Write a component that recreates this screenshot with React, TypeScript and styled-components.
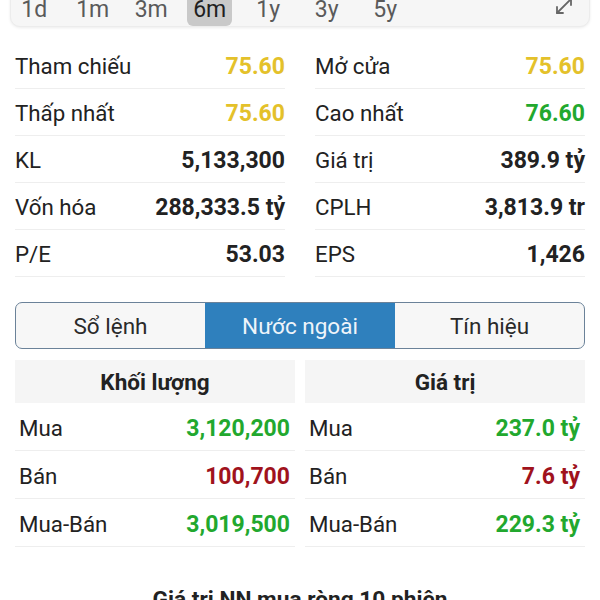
import React from "react";
import styled, { createGlobalStyle } from "styled-components";
import { MoveDiagonal } from "lucide-react";

const Global = createGlobalStyle`
  html, body { margin: 0; padding: 0; background: #ffffff; }
  body { font-family: Roboto, "Noto Sans", "Liberation Sans", sans-serif; color: #222; overflow: hidden; }
`;

const Page = styled.div`
  width: 600px;
  display: flex;
  flex-direction: column;
`;

const RangeBar = styled.div`
  margin: -17px 10px 0 10px;
  height: 44px;
  box-sizing: border-box;
  background: #f6f6f6;
  border: 1px solid #ececec;
  border-radius: 0 0 10px 10px;
  box-shadow: 0 1px 3px rgba(0, 0, 0, 0.08);
  display: flex;
  align-items: stretch;
  padding: 0 13px 0 0;
`;

const RangeStrip = styled.div`
  display: flex;
  align-items: stretch;
  margin-left: -6px;
`;

const RangeItem = styled.div`
  width: 58.5px;
  display: flex;
  justify-content: center;
  align-items: stretch;
`;

const RangeLabel = styled.div<{ $active?: boolean }>`
  display: flex;
  align-items: flex-end;
  padding: 0 6px 5px 6px;
  font-size: 23px;
  line-height: 23px;
  color: ${(p) => (p.$active ? "#1f1f1f" : "#5a5a5a")};
  background: ${(p) => (p.$active ? "#c9c9c9" : "transparent")};
  border-radius: 0 0 6px 6px;
`;

const Spacer = styled.div`
  flex: 1;
`;

const ExpandBox = styled.div`
  display: flex;
  align-items: flex-end;
  padding-bottom: 8px;
  color: #666;
`;

const StatsGrid = styled.div`
  display: grid;
  grid-template-columns: 270px 270px;
  column-gap: 30px;
  padding: 15px 15px 0 15px;
`;

const StatRow = styled.div`
  height: 47px;
  box-sizing: border-box;
  border-bottom: 1px solid #eeeeee;
  display: flex;
  align-items: center;
  justify-content: space-between;
  padding-top: 2px;
`;

const Label = styled.span`
  color: #222;
  font-weight: 400;
  font-size: 22.3px;
`;

const Value = styled.span<{ $color?: string }>`
  color: ${(p) => p.$color || "#222"};
  font-weight: 700;
  font-size: 23px;
`;

const Tabs = styled.div`
  margin: 25px 15px 0 15px;
  height: 47px;
  box-sizing: border-box;
  border: 1px solid #6b8299;
  border-radius: 7px;
  overflow: hidden;
  display: grid;
  grid-template-columns: 189px 190px 1fr;
  background: #f7f7f7;
`;

const Tab = styled.div<{ $active?: boolean }>`
  display: flex;
  align-items: center;
  justify-content: center;
  font-size: 22.5px;
  color: ${(p) => (p.$active ? "#eef4fa" : "#2a2a2a")};
  background: ${(p) => (p.$active ? "#2f80bd" : "transparent")};
`;

const Table = styled.div`
  margin: 11px 15px 0 15px;
  display: grid;
  grid-template-columns: 280px 280px;
  column-gap: 10px;
`;

const Column = styled.div`
  display: flex;
  flex-direction: column;
`;

const HeadCell = styled.div`
  height: 43px;
  background: #f5f5f5;
  display: flex;
  align-items: center;
  justify-content: center;
  font-weight: 700;
  font-size: 22.5px;
  color: #222;
`;

const TRow = styled.div`
  height: 48px;
  box-sizing: border-box;
  border-bottom: 1px solid #eeeeee;
  display: flex;
  align-items: center;
  justify-content: space-between;
  padding: 3px 5px 0 4px;
`;

const Title = styled.div`
  margin-top: 40px;
  text-align: center;
  font-weight: 700;
  font-size: 22.7px;
  line-height: 26px;
  color: #222;
`;

const YELLOW = "#e4c12a";
const GREEN = "#22a82e";
const RED = "#a0121c";

const ranges = ["1d", "1m", "3m", "6m", "1y", "3y", "5y"];

const left: [string, string, string?][] = [
  ["Tham chiếu", "75.60", YELLOW],
  ["Thấp nhất", "75.60", YELLOW],
  ["KL", "5,133,300"],
  ["Vốn hóa", "288,333.5 tỷ"],
  ["P/E", "53.03"],
];

const right: [string, string, string?][] = [
  ["Mở cửa", "75.60", YELLOW],
  ["Cao nhất", "76.60", GREEN],
  ["Giá trị", "389.9 tỷ"],
  ["CPLH", "3,813.9 tr"],
  ["EPS", "1,426"],
];

const vol: [string, string, string][] = [
  ["Mua", "3,120,200", GREEN],
  ["Bán", "100,700", RED],
  ["Mua-Bán", "3,019,500", GREEN],
];

const val: [string, string, string][] = [
  ["Mua", "237.0 tỷ", GREEN],
  ["Bán", "7.6 tỷ", RED],
  ["Mua-Bán", "229.3 tỷ", GREEN],
];

export default function App() {
  const stats: React.ReactNode[] = [];
  left.forEach((l, i) => {
    const r = right[i];
    stats.push(
      <StatRow key={"l" + i}>
        <Label>{l[0]}</Label>
        <Value $color={l[2]}>{l[1]}</Value>
      </StatRow>
    );
    stats.push(
      <StatRow key={"r" + i}>
        <Label>{r[0]}</Label>
        <Value $color={r[2]}>{r[1]}</Value>
      </StatRow>
    );
  });
  return (
    <Page>
      <Global />
      <RangeBar>
        <RangeStrip>
          {ranges.map((r) => (
            <RangeItem key={r}>
              <RangeLabel $active={r === "6m"}>{r}</RangeLabel>
            </RangeItem>
          ))}
        </RangeStrip>
        <Spacer />
        <ExpandBox>
          <MoveDiagonal size={24} strokeWidth={1.8} />
        </ExpandBox>
      </RangeBar>
      <StatsGrid>{stats}</StatsGrid>
      <Tabs>
        <Tab>Sổ lệnh</Tab>
        <Tab $active>Nước ngoài</Tab>
        <Tab>Tín hiệu</Tab>
      </Tabs>
      <Table>
        <Column>
          <HeadCell>Khối lượng</HeadCell>
          {vol.map((v) => (
            <TRow key={v[0]}>
              <Label>{v[0]}</Label>
              <Value $color={v[2]}>{v[1]}</Value>
            </TRow>
          ))}
        </Column>
        <Column>
          <HeadCell>Giá trị</HeadCell>
          {val.map((v) => (
            <TRow key={v[0]}>
              <Label>{v[0]}</Label>
              <Value $color={v[2]}>{v[1]}</Value>
            </TRow>
          ))}
        </Column>
      </Table>
      <Title>Giá trị NN mua ròng 10 phiên</Title>
    </Page>
  );
}
